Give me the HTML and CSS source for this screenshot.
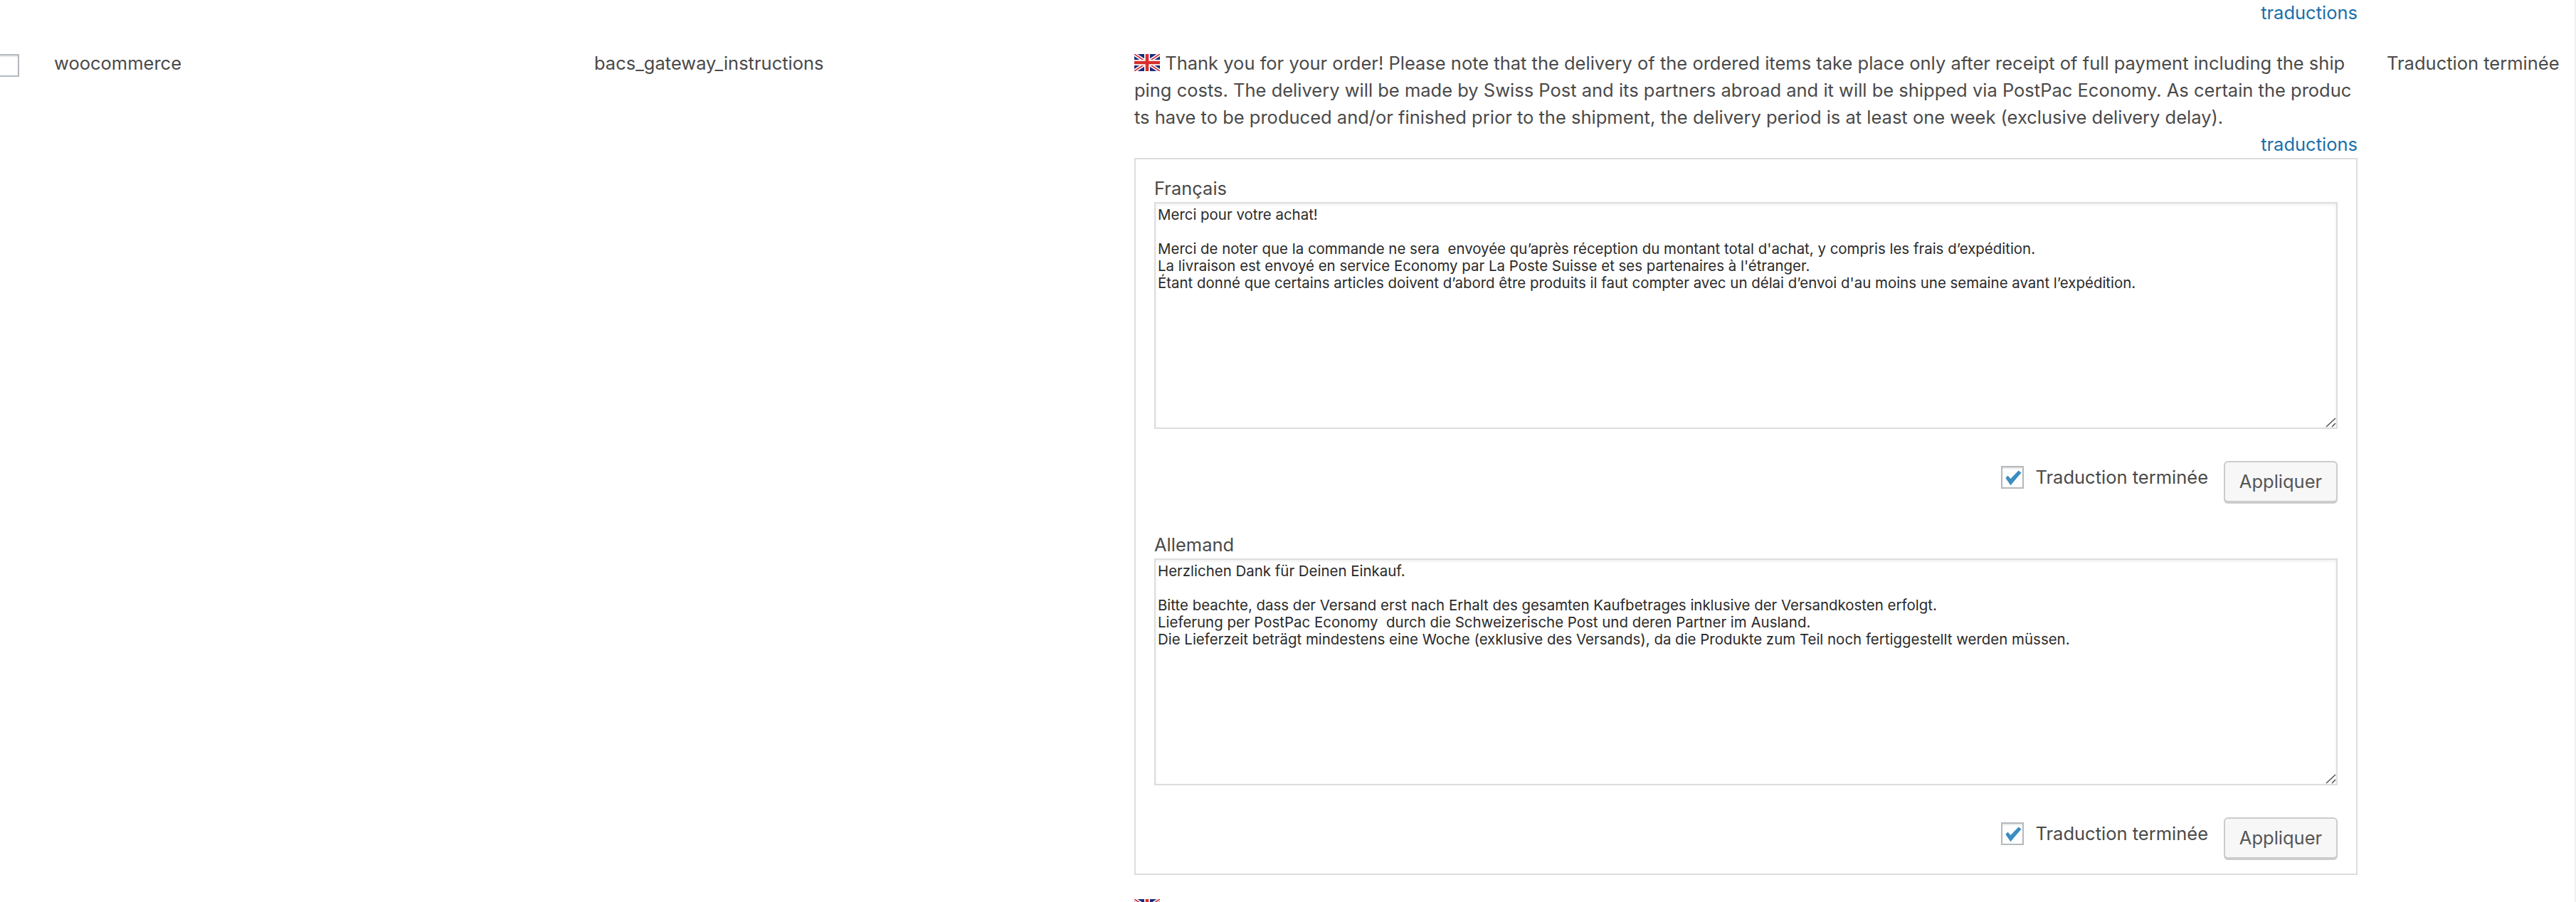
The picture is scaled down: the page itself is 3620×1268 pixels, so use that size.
FILE: index.html
```html
<!DOCTYPE html>
<html lang="fr">
<head>
<meta charset="utf-8">
<title>Traductions</title>
<link rel="stylesheet" href="styles.css">
</head>
<body>
<div class="page">
  <div class="row row-prev">
    <div class="cell-value"><a class="link" href="#">traductions</a></div>
  </div>
  <div class="row row-main">
    <div class="cell-check"><input class="check" type="checkbox" aria-label="Sélectionner"></div>
    <div class="cell-domain">woocommerce</div>
    <div class="cell-name">bacs_gateway_instructions</div>
    <div class="cell-value">
      <div class="source">
        <svg class="flag" viewBox="0 0 36 24" aria-hidden="true"><rect width="36" height="24" fill="#1b2a7a"/><path d="M0 0L36 24M36 0L0 24" stroke="#fff" stroke-width="5"/><path d="M0 0L36 24M36 0L0 24" stroke="#d3303a" stroke-width="1.8"/><path d="M18 0V24M0 12H36" stroke="#fff" stroke-width="8"/><path d="M18 0V24M0 12H36" stroke="#d8302c" stroke-width="4.6"/></svg>
        Thank you for your order! Please note that the delivery of the ordered items take place only after receipt of full payment including the ship<br>ping costs. The delivery will be made by Swiss Post and its partners abroad and it will be shipped via PostPac Economy. As certain the produc<br>ts have to be produced and/or finished prior to the shipment, the delivery period is at least one week (exclusive delivery delay).
      </div>
      <div class="links"><a class="link" href="#">traductions</a></div>
      <div class="box">
        <div class="lang">
          <label class="lang-name">Français</label>
          <textarea class="field" readonly>Merci pour votre achat!

Merci de noter que la commande ne sera  envoyée qu’après réception du montant total d'achat, y compris les frais d’expédition.
La livraison est envoyé en service Economy par La Poste Suisse et ses partenaires à l'étranger.
Étant donné que certains articles doivent d’abord être produits il faut compter avec un délai d’envoi d'au moins une semaine avant l’expédition.</textarea>
          <div class="actions">
            <label class="done"><input class="check" type="checkbox" checked>Traduction terminée</label>
            <button class="button" type="button">Appliquer</button>
          </div>
        </div>
        <div class="lang">
          <label class="lang-name">Allemand</label>
          <textarea class="field" readonly>Herzlichen Dank für Deinen Einkauf.

Bitte beachte, dass der Versand erst nach Erhalt des gesamten Kaufbetrages inklusive der Versandkosten erfolgt.
Lieferung per PostPac Economy  durch die Schweizerische Post und deren Partner im Ausland.
Die Lieferzeit beträgt mindestens eine Woche (exklusive des Versands), da die Produkte zum Teil noch fertiggestellt werden müssen.</textarea>
          <div class="actions">
            <label class="done"><input class="check" type="checkbox" checked>Traduction terminée</label>
            <button class="button" type="button">Appliquer</button>
          </div>
        </div>
      </div>
      <div class="source source-next">
        <svg class="flag" viewBox="0 0 36 24" aria-hidden="true"><rect width="36" height="24" fill="#1b2a7a"/><path d="M0 0L36 24M36 0L0 24" stroke="#fff" stroke-width="5"/><path d="M0 0L36 24M36 0L0 24" stroke="#d3303a" stroke-width="1.8"/><path d="M18 0V24M0 12H36" stroke="#fff" stroke-width="8"/><path d="M18 0V24M0 12H36" stroke="#d8302c" stroke-width="4.6"/></svg>
      </div>
    </div>
    <div class="cell-status">Traduction terminée</div>
  </div>
</div>
</body>
</html>
```
FILE: styles.css
```css
html, body { margin: 0; height: 100%; background: #fff; }
body { overflow: hidden; font-family: Inter, "Liberation Sans", sans-serif; font-size: 25.5px; line-height: 38px; color: #4a4a4a; }
.page { box-sizing: border-box; height: 1268px; overflow: hidden; border-right: 2px solid #f1f1f1; }
.row { display: grid; grid-template-columns: 76px 759px 759px 1719px 1fr; }
.row-prev { height: 32px; }
.row-prev .cell-value { grid-column: 4; display: flex; justify-content: flex-end; margin-top: -1px; }
.row-main { padding-top: 36px; }
.cell-check { padding-top: 8px; }
.cell-domain, .cell-name { position: relative; top: 2px; }
.cell-status { position: relative; top: 2px; padding-left: 41px; white-space: nowrap; }
.link { color: #1b6fa8; text-decoration: none; }
.links { text-align: right; }
.source { white-space: nowrap; margin-top: 2px; }
.flag { width: 36px; height: 24px; vertical-align: -2px; filter: blur(.7px); }
.box { border: 2px solid #ddd; padding: 18px 26px 0 26px; height: 1008px; box-sizing: border-box; }
.lang { height: 501px; }
.lang-name { display: block; height: 42px; position: relative; top: 4px; }
.field { display: block; box-sizing: border-box; width: 100%; height: 319px; margin: 0; padding: 4px 2px 0 3px; border: 2px solid #ddd; box-shadow: inset 0 2px 4px rgba(0,0,0,.07); background: #fff; color: #2a2a2a; font: 20.45px/24px Inter, "Liberation Sans", sans-serif; resize: vertical; outline: none; }
.field::-webkit-resizer { background: url("data:image/svg+xml,%3Csvg xmlns='http://www.w3.org/2000/svg' width='15' height='15'%3E%3Cpath d='M1 14L14 2M9 14L14 9' stroke='%23555' stroke-width='1.6' fill='none'/%3E%3C/svg%3E") no-repeat right bottom; }
.actions { display: flex; justify-content: flex-end; align-items: flex-start; margin-top: 49px; }
.done { display: flex; align-items: center; gap: 16px; margin-right: 22px; }
.check { appearance: none; display: block; box-sizing: border-box; width: 32px; height: 32px; margin: 0; border: 2px solid #b4b9be; background: #fff; box-shadow: inset 0 2px 2px rgba(0,0,0,.1); }
.cell-check .check { margin-left: -5px; }
.check:checked::before { content: ""; display: block; width: 100%; height: 100%; background: #3c8dc0; clip-path: polygon(14% 54%, 25% 41%, 39% 57%, 79% 16%, 93% 27%, 39% 90%); }
.button { box-sizing: border-box; width: 160px; height: 58px; padding: 0; margin-top: -4px; border: 2px solid #ccc; border-radius: 6px; background: #f7f7f7; box-shadow: 0 2px 0 #ccc; color: #555; font: 25.5px/52px Inter, "Liberation Sans", sans-serif; }
.source-next { padding-top: 28px; margin-top: 0; }
```
